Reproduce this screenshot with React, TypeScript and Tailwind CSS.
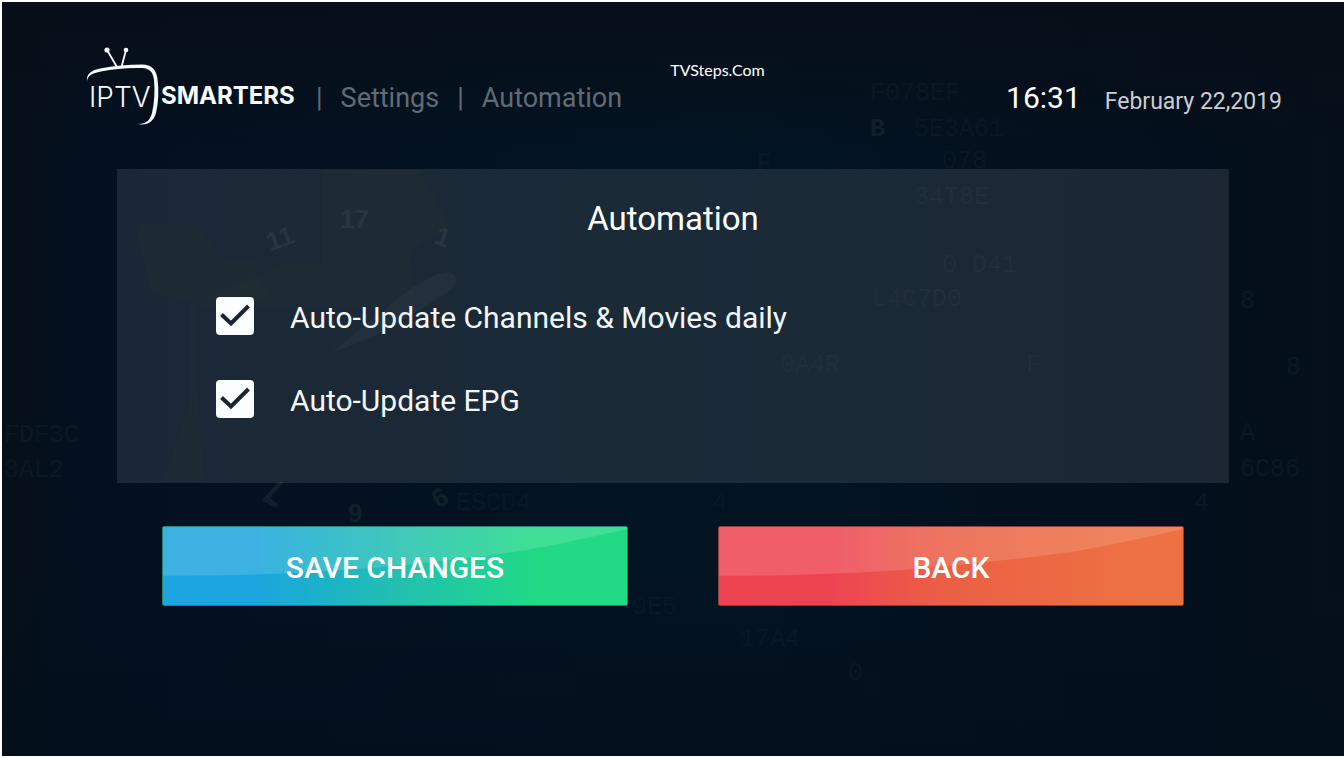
import React from "react";

type Option = { id: string; label: string };

const OPTIONS: Option[] = [
  { id: "channels", label: "Auto-Update Channels & Movies daily" },
  { id: "epg", label: "Auto-Update EPG" }
];

const App = () => {
  const [checked, setChecked] = React.useState<Record<string, boolean>>({
    channels: true,
    epg: true
  });

  return (
    <div className="relative isolate min-h-screen overflow-hidden border-y-2 border-l-2 border-white bg-[#04101e] font-['Roboto',sans-serif] text-white">
      <Backdrop />
      <header className="flex h-[167px] items-start pt-11 pr-[62px] pl-[84px]">
        <Logo />
        <nav className="mt-9 flex items-center text-[27px] leading-8 text-[#626a74]">
          <span className="ml-[18px]">|</span>
          <a href="#settings" className="ml-[18px]">
            Settings
          </a>
          <span className="ml-[18px]">|</span>
          <a href="#automation" className="ml-[18px]">
            Automation
          </a>
        </nav>
        <p className="mt-[14px] ml-12 font-['Lato',sans-serif] text-[16px] leading-5">
          TVSteps.Com
        </p>
        <div className="mt-9 ml-auto flex items-start gap-6">
          <time className="text-[30px] leading-8">16:31</time>
          <time className="mt-1 text-[23px] leading-8 text-[#c9ced3]">
            February 22,2019
          </time>
        </div>
      </header>

      <main className="mx-[115px]">
        <section className="h-[314px] bg-[#f4f6ff]/10 pt-8">
          <h1 className="text-center text-[33px] leading-9">Automation</h1>
          <div className="mt-[60px] ml-[99px] flex flex-col gap-[45px]">
            {OPTIONS.map((item) => (
              <CheckRow
                key={item.id}
                data={item}
                isChecked={checked[item.id]}
                onToggle={() =>
                  setChecked({ ...checked, [item.id]: !checked[item.id] })
                }
              />
            ))}
          </div>
        </section>
        <div className="mx-[45px] mt-[43px] grid grid-cols-2 gap-[90px]">
          <GlossyButton
            label="SAVE CHANGES"
            className="border-[#23826f] bg-linear-to-r from-[#1ca5de] from-20% via-[#22bfb0] via-50% to-[#22d986] to-80%"
          />
          <GlossyButton
            label="BACK"
            className="border-[#8c3d40] bg-linear-to-r from-[#ee4452] from-25% via-[#eb6044] via-50% to-[#ed7142] to-90%"
          />
        </div>
      </main>
    </div>
  );
};

const CheckRow = ({
  data,
  isChecked,
  onToggle
}: {
  data: Option;
  isChecked: boolean;
  onToggle: () => void;
}) => {
  return (
    <div className="flex h-[38px] items-start">
      <span className="relative flex">
        <input
          id={data.id}
          type="checkbox"
          checked={isChecked}
          onChange={onToggle}
          className="size-[38px] cursor-pointer appearance-none rounded bg-[#fbfeff]"
        />
        {isChecked && (
          <svg
            viewBox="0 0 38 38"
            className="pointer-events-none absolute inset-0 size-full"
            fill="none"
            stroke="#1a2531"
            strokeWidth="4"
            aria-hidden="true"
          >
            <path d="M5.5 17.5 15 26.500 32.500 9" />
          </svg>
        )}
      </span>
      <label
        htmlFor={data.id}
        className="ml-9 cursor-pointer text-[30px] leading-[42px] text-[#f3f7f9]"
      >
        {data.label}
      </label>
    </div>
  );
};

const GlossyButton = ({
  label,
  className
}: {
  label: string;
  className: string;
}) => {
  return (
    <button
      type="button"
      className={`relative h-20 cursor-pointer overflow-hidden rounded-xs border pt-0.5 text-[30px] font-medium ${className}`}
    >
      <svg
        viewBox="0 0 466 80"
        preserveAspectRatio="none"
        className="absolute inset-0 size-full"
        aria-hidden="true"
      >
        <path
          d="M0 0H466V2C432 10 400 17 368 23C335 29 302 32 270 36C180 46 110 50 0 50Z"
          fill="#fff"
          fillOpacity="0.14"
        />
      </svg>
      <span className="relative">{label}</span>
    </button>
  );
};

const Logo = () => {
  return (
    <svg
      viewBox="0 0 212 82"
      className="h-[82px] w-[212px] shrink-0"
      fill="#f6fbff"
      role="img"
      aria-label="IPTV Smarters"
    >
      <circle cx="21" cy="4" r="2.6" />
      <circle cx="40" cy="4" r="2.3" />
      <path
        d="M21 4 31 21M40 4 35.500 21"
        stroke="#f6fbff"
        strokeWidth="1.8"
      />
      <path d="M1 35C0 28 6 24 14 22.500C28 20 42 18.500 56 18.500C66 18.500 70.500 24 71.500 33C73 45 72.500 56 70 67C67.500 76 61 80 51 77.800C59 78.500 64 75 66 67C68.500 56 69 45 68 34C67 26 64 22.500 56 22C42 21.500 28 23 15 25.500C6 27.300 2 29.500 1 35Z" />
      <text
        x="3"
        y="61"
        fontFamily="Inter, sans-serif"
        fontWeight="300"
        fontSize="28"
      >
        IPTV
      </text>
      <text
        x="75"
        y="58"
        fontFamily="Inter, sans-serif"
        fontWeight="700"
        fontSize="24"
      >
        SMARTERS
      </text>
    </svg>
  );
};

// Faint clock digits and code fragments behind the page
const Backdrop = () => {
  return (
    <svg
      viewBox="0 0 1342 754"
      preserveAspectRatio="xMidYMid slice"
      className="absolute inset-0 -z-10 size-full"
      aria-hidden="true"
    >
      <defs>
        <linearGradient id="shade" x1="0" y1="0" x2="1" y2="0">
          <stop offset="0" stopColor="#070f18" />
          <stop offset="0.06" stopColor="#041020" />
          <stop offset="0.55" stopColor="#021422" />
          <stop offset="0.9" stopColor="#040f1d" />
          <stop offset="1" stopColor="#060f19" />
        </linearGradient>
        <linearGradient id="fade" x1="0" y1="0" x2="0" y2="1">
          <stop offset="0" stopColor="#080e17" stopOpacity="0.9" />
          <stop offset="0.2" stopColor="#080e17" stopOpacity="0" />
          <stop offset="0.75" stopColor="#040f1d" stopOpacity="0" />
          <stop offset="1" stopColor="#040f1d" stopOpacity="0.9" />
        </linearGradient>
      </defs>
      <rect width="1342" height="754" fill="url(#shade)" />
      <rect width="1342" height="754" fill="url(#fade)" />
      <g fill="#08171b">
        <path d="M320 168H418L448 224L408 250L414 304H190L280 262H320Z" opacity="0.6" />
        <path d="M134 222H196L220 258H250L268 298H195V380L202 480H162L188 400V300L150 290Z" opacity="0.6" />
      </g>
      <g
        fill="#10212b"
        fontFamily="'Liberation Sans', sans-serif"
        fontWeight="700"
        fontSize="26"
      >
        <text x="338" y="226">17</text>
        <text x="264" y="246" transform="rotate(-20 276 236)">11</text>
        <text x="434" y="244" transform="rotate(20 441 234)">1</text>
        <text x="346" y="520">9</text>
        <text x="430" y="504" transform="rotate(-30 438 494)">6</text>
        <path d="M276 480 260 498 274 506 276 502 268 496 282 480Z" />
        <path
          d="M392 300C410 284 436 270 444 270C458 270 456 284 446 290L408 314C380 332 350 345 330 350Z"
          opacity="0.5"
        />
      </g>
      <g
        fill="#091825"
        fontFamily="'Liberation Mono', monospace"
        fontSize="25"
      >
        <text x="868" y="98">F078EF</text>
        <text x="868" y="134" fontWeight="700" fill="#0f202b">B</text>
        <text x="912" y="134">5E3A61</text>
        <text x="754" y="168" fontWeight="700">F</text>
        <text x="940" y="166">078</text>
        <text x="912" y="202">34T8E</text>
        <text x="940" y="270">0 D41</text>
        <text x="870" y="304">L4C7D0</text>
        <text x="778" y="370">0A4R</text>
        <text x="1024" y="370">F</text>
        <text x="2" y="440">FDF3C</text>
        <text x="2" y="475">8AL2</text>
        <text x="454" y="508">ESCD4</text>
        <text x="710" y="508">4</text>
        <text x="1192" y="508">4</text>
        <text x="1238" y="306">8</text>
        <text x="1284" y="372">8</text>
        <text x="1238" y="438">A</text>
        <text x="1238" y="474">6C86</text>
        <text x="630" y="612">9E5</text>
        <text x="738" y="644">17A4</text>
        <text x="846" y="678">0</text>
      </g>
    </svg>
  );
};

export default App;
